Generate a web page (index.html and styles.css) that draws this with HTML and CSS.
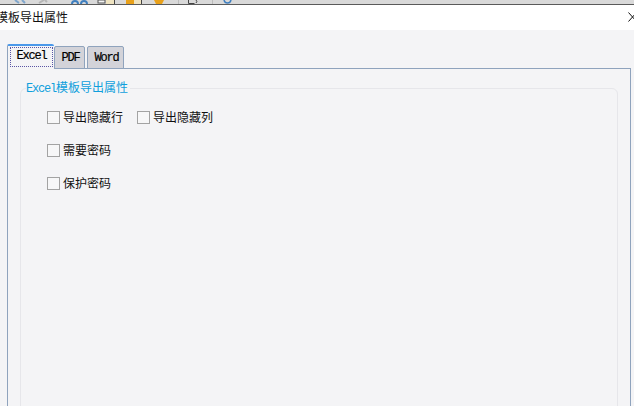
FILE: index.html
```html
<!DOCTYPE html>
<html lang="zh">
<head>
<meta charset="utf-8">
<title>模板导出属性</title>
<link rel="stylesheet" href="styles.css">
</head>
<body>
<div class="toolbar-strip">
  <svg class="strip-icons" width="634" height="4" viewBox="0 0 634 4">
    <path d="M15 0l4 3M22 0l3 3" stroke="#7fa6cc" stroke-width="2" fill="none"/>
    <path d="M39 3l5-3M45 0l2 2" stroke="#b5b5b5" stroke-width="2" fill="none"/>
    <path d="M72 4c0-4 6-4 6 0M81 4c0-4 6-4 6 0" stroke="#3f7fbf" stroke-width="2" fill="none"/>
    <rect x="98" y="0" width="7" height="3" fill="#f4f4f4" stroke="#555" stroke-width="1"/>
    <rect x="106" y="0" width="8" height="4" fill="#efe3c0"/>
    <rect x="114" y="0" width="1" height="4" fill="#444"/>
    <rect x="126" y="0" width="8" height="4" fill="#e9a11a"/>
    <rect x="134" y="0" width="8" height="4" fill="#efe3c0"/>
    <rect x="141" y="0" width="1" height="4" fill="#444"/>
    <path d="M154 0h10l-2 4h-6z" fill="#e9a11a"/>
    <rect x="178" y="0" width="1" height="4" fill="#bcbcbc"/>
    <path d="M188.500 0v3.500h6M196 0a2 2 0 0 1 0 3" stroke="#444" fill="none"/>
    <rect x="212" y="0" width="1" height="4" fill="#bcbcbc"/>
    <path d="M224 0c1 4 6 4 7 0" stroke="#3f7fbf" stroke-width="1.500" fill="none"/>
  </svg>
</div>
<header class="titlebar">
  <span class="title">模板导出属性</span>
  <svg class="close" width="9" height="10" viewBox="0 0 9 10">
    <path d="M0.500 0.500l8 9M8.500 0.500l-8 9" stroke="#111" stroke-width="1" fill="none"/>
  </svg>
</header>
<main class="content">
  <nav class="tabs">
    <div class="tab active"><span class="tab-focus">Excel</span></div>
    <div class="tab tab-pdf">PDF</div>
    <div class="tab tab-word">Word</div>
  </nav>
  <section class="panel">
    <fieldset class="group">
      <legend class="group-title"><span class="latin">Excel</span>模板导出属性</legend>
      <div class="row">
        <label class="check"><span class="box"></span>导出隐藏行</label>
        <label class="check"><span class="box"></span>导出隐藏列</label>
      </div>
      <div class="row">
        <label class="check"><span class="box"></span>需要密码</label>
      </div>
      <div class="row">
        <label class="check"><span class="box"></span>保护密码</label>
      </div>
    </fieldset>
  </section>
</main>
</body>
</html>
```
FILE: styles.css
```css
* { box-sizing: border-box; }
html, body { height: 100%; }
body {
  margin: 0;
  width: 634px;
  height: 406px;
  overflow: hidden;
  display: flex;
  flex-direction: column;
  background: #f4f4f6;
  color: #111;
  font-family: "Noto Sans CJK SC", "Liberation Sans", sans-serif;
  font-size: 12px;
}
.toolbar-strip {
  flex: none;
  height: 5px;
  background: #d9d9d9;
  border-bottom: 1px solid #5a5a5a;
  overflow: hidden;
}
.strip-icons { display: block; }
.titlebar {
  flex: none;
  height: 25px;
  background: #fff;
  display: flex;
  align-items: center;
  justify-content: space-between;
  overflow: hidden;
  padding-bottom: 1px;
}
.title { margin-left: -4px; line-height: 24px; }
.close { margin-right: -3px; flex: none; }
.content {
  flex: 1;
  min-height: 0;
  padding: 14px 3px 0 7px;
  display: flex;
  flex-direction: column;
}
.tabs {
  flex: none;
  display: flex;
  align-items: flex-end;
  height: 25px;
  gap: 1px;
  position: relative;
  z-index: 1;
  margin-bottom: -1px;
}
.tab {
  height: 23px;
  border: 1px solid #8fa3bd;
  border-radius: 2px 2px 0 0;
  background: #d3d3d9;
  font-family: "Liberation Mono", monospace;
  font-size: 12px;
  letter-spacing: -1.2px;
  -webkit-text-stroke: 0.2px #000;
  line-height: 22px;
  text-align: center;
  color: #000;
}
.tab-pdf { width: 31px; padding-left: 2px; }
.tab-word { width: 37px; margin-left: 1px; padding-left: 2px; }
.tab.active {
  height: 25px;
  width: 47px;
  margin-right: -1px;
  padding: 1px 1px 0 2px;
  border-top: 2px solid #4a98ea;
  border-bottom: 0;
  border-right: 0;
  background: #f4f4f6;
}
.tab-focus {
  display: block;
  height: 20px;
  line-height: 16px;
  border: 1px dotted #5a55a5;
}
.panel {
  flex: 1;
  min-height: 0;
  border: 1px solid #8fa3bd;
  border-bottom: 0;
  padding: 11px 12px 0;
}
.group {
  margin: 0;
  height: 340px;
  border: 1px solid #e6e6ea;
  border-radius: 6px;
  padding: 12px 0 0 26px;
  min-width: 0;
}
.group-title {
  margin-left: -21px;
  padding: 0 2px 0 0;
  color: #0f9fdc;
  font-size: 12px;
  line-height: 14px;
}
.latin {
  font-family: "Liberation Mono", monospace;
  letter-spacing: -1.2px;
}
.row {
  display: flex;
  gap: 14px;
  height: 33px;
  align-items: flex-start;
}
.check {
  display: flex;
  align-items: center;
  gap: 3px;
  height: 18px;
  line-height: 18px;
}
.box {
  width: 13px;
  height: 13px;
  background: #f7f7f8;
  border: 1px solid #a3a3a3;
  flex: none;
}
```
